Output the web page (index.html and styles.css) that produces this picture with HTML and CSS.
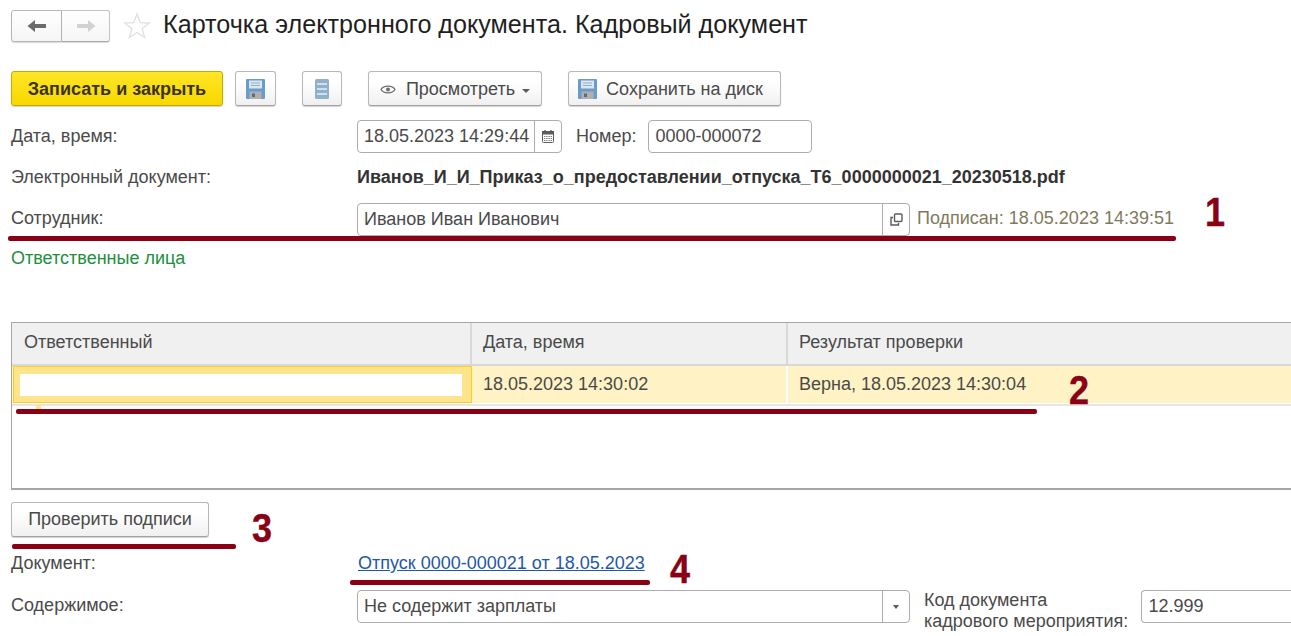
FILE: index.html
```html
<!DOCTYPE html>
<html lang="ru">
<head>
<meta charset="utf-8">
<title>Карточка электронного документа. Кадровый документ</title>
<link rel="stylesheet" href="styles.css">
</head>
<body>
<main class="page">
  <header class="header">
    <div class="nav">
      <button class="nav-btn nav-back" type="button" aria-label="Назад">
        <svg width="20" height="14" viewBox="0 0 20 14"><path d="M0.5 7 L8 1 V5 H19 V9 H8 V13 Z" fill="#6b6b6b"/></svg>
      </button>
      <button class="nav-btn nav-forward" type="button" aria-label="Вперёд">
        <svg width="20" height="14" viewBox="0 0 20 14"><path d="M19.5 7 L12 1 V5 H1 V9 H12 V13 Z" fill="#d2d2d2"/></svg>
      </button>
    </div>
    <svg class="star" width="28" height="28" viewBox="0 0 28 28"><path d="M14 2 L17.2 10.6 L26.4 11 L19.2 16.7 L21.7 25.6 L14 20.5 L6.3 25.6 L8.8 16.7 L1.6 11 L10.8 10.6 Z" fill="#fff" stroke="#e0e0e0" stroke-width="1.3"/></svg>
    <h1 class="title">Карточка электронного документа. Кадровый документ</h1>
  </header>

  <div class="toolbar">
    <div class="toolbar-group">
      <button class="btn btn-primary" type="button">Записать и закрыть</button>
      <button class="btn btn-icon btn-save" type="button" aria-label="Записать">
        <svg width="19" height="20" viewBox="0 0 19 20"><use href="#floppy"/></svg>
      </button>
    </div>
    <button class="btn btn-icon btn-list" type="button" aria-label="Список">
      <svg width="14" height="20" viewBox="0 0 14 20"><rect width="14" height="20" rx="1.5" fill="#8fb1c9"/><path d="M2 5H12M2 10H12M2 15H12" stroke="#e6eef3" stroke-width="1.4"/></svg>
    </button>
    <button class="btn btn-view" type="button">
      <svg width="16" height="11" viewBox="0 0 16 11"><path d="M1 5.5 C3.5 1 12.5 1 15 5.5 C12.5 10 3.5 10 1 5.5 Z" fill="none" stroke="#6e6e6e" stroke-width="1.3"/><circle cx="8" cy="5.5" r="2" fill="#6e6e6e"/></svg>
      <span>Просмотреть</span>
      <span class="caret"></span>
    </button>
    <button class="btn btn-disk" type="button">
      <svg width="19" height="20" viewBox="0 0 19 20">
        <g id="floppy">
          <path d="M1 0H18a1 1 0 0 1 1 1V19a1 1 0 0 1-1 1H1a1 1 0 0 1-1-1V1a1 1 0 0 1 1-1Z" fill="#6a9ccb"/>
          <rect x="3" y="1.5" width="13" height="8" fill="#dbe6f0"/>
          <path d="M5 4H14M5 6.5H14" stroke="#8fb1c9" stroke-width="1"/>
          <rect x="3.5" y="12.5" width="12" height="7.5" fill="#b0b0b0"/>
          <rect x="6" y="14.5" width="3" height="3.5" fill="#5d6d7a"/>
        </g>
      </svg>
      <span>Сохранить на диск</span>
    </button>
  </div>

  <div class="row row-date">
    <label class="label">Дата, время:</label>
    <div class="field field-date">
      <span class="field-text">18.05.2023 14:29:44</span>
      <span class="field-addon">
        <svg width="12" height="13" viewBox="0 0 12 13"><rect x="0.5" y="1.5" width="11" height="11" rx="1" fill="#fff" stroke="#5c5c5c"/><rect y="1" width="12" height="3.5" fill="#5c5c5c"/><path d="M3 0V2M9 0V2" stroke="#5c5c5c" stroke-width="1.4"/><path d="M2 6.5H10M2 8.5H10M2 10.5H10" stroke="#7d7d7d" stroke-dasharray="1.4 .8"/></svg>
      </span>
    </div>
    <label class="label label-number">Номер:</label>
    <div class="field field-number"><span class="field-text">0000-000072</span></div>
  </div>

  <div class="row row-text row-doc">
    <span class="label">Электронный документ:</span>
    <strong class="filename">Иванов_И_И_Приказ_о_предоставлении_отпуска_Т6_0000000021_20230518.pdf</strong>
  </div>

  <div class="row row-employee">
    <label class="label label-raised">Сотрудник:</label>
    <div class="field field-employee">
      <span class="field-text">Иванов Иван Иванович</span>
      <span class="field-addon">
        <svg width="13" height="13" viewBox="0 0 13 13"><rect x="4.5" y="1" width="7.5" height="7.5" rx="1" fill="none" stroke="#5c5c5c" stroke-width="1.4"/><path d="M3 4.5H1V12H8.5V10" fill="none" stroke="#5c5c5c" stroke-width="1.4"/></svg>
      </span>
    </div>
    <span class="signed">Подписан: 18.05.2023 14:39:51</span>
  </div>

  <div class="row-text section-link">Ответственные лица</div>

  <div class="table">
    <div class="table-head">
      <div class="col col-1">Ответственный</div>
      <div class="col col-2">Дата, время</div>
      <div class="col col-3">Результат проверки</div>
    </div>
    <div class="table-row">
      <div class="col col-1 cell-selected"><div class="redacted"></div></div>
      <div class="col col-2">18.05.2023 14:30:02</div>
      <div class="col col-3">Верна, 18.05.2023 14:30:04</div>
    </div>
    <div class="row-line"></div>
    <span class="row-marker"></span>
  </div>

  <button class="btn btn-check" type="button">Проверить подписи</button>

  <div class="row row-text row-source">
    <span class="label">Документ:</span>
    <a class="doc-link" href="#">Отпуск 0000-000021 от 18.05.2023</a>
  </div>

  <div class="row row-content">
    <label class="label label-content">Содержимое:</label>
    <div class="field field-content">
      <span class="field-text">Не содержит зарплаты</span>
      <span class="field-addon"><span class="caret caret-dark"></span></span>
    </div>
    <label class="label label-code">Код документа<br>кадрового мероприятия:</label>
    <div class="field field-code"><span class="field-text">12.999</span></div>
  </div>
</main>

<div class="mark mark-line mark-line-1"></div>
<div class="mark mark-line mark-line-2"></div>
<div class="mark mark-line mark-line-3"></div>
<div class="mark mark-line mark-line-4"></div>
<div class="mark mark-num mark-num-1">1</div>
<div class="mark mark-num mark-num-2">2</div>
<div class="mark mark-num mark-num-3">3</div>
<div class="mark mark-num mark-num-4">4</div>
</body>
</html>
```

FILE: styles.css
```css
* { box-sizing: border-box; }

html, body {
  margin: 0;
  width: 1291px;
  height: 636px;
  overflow: hidden;
  background: #fff;
}

body {
  position: relative;
  font-family: "Liberation Sans", Arial, sans-serif;
  font-size: 18px;
  color: #4a4a4a;
}

.page {
  padding: 10px 0 0 11px;
  display: flex;
  flex-direction: column;
  align-items: flex-start;
}

/* header */
.header {
  display: flex;
  align-items: center;
  height: 32px;
  margin-bottom: 29px;
}

.nav {
  display: flex;
  width: 99px;
  height: 32px;
  margin-right: 13px;
}

.nav-btn {
  display: flex;
  align-items: center;
  justify-content: center;
  padding: 0;
  height: 32px;
  border: 1px solid #c4c4c4;
  border-bottom-color: #aaa;
  background: linear-gradient(#fff, #f5f5f5);
  box-shadow: 0 1px 1px rgba(0, 0, 0, .15);
}

.nav-back {
  width: 51px;
  border-radius: 3px 0 0 3px;
  border-color: #b5b5b5;
}

.nav-forward {
  width: 48px;
  border-left: 0;
  border-radius: 0 3px 3px 0;
}

.star { margin-right: 12px; }

.title {
  margin: 0 0 3px;
  font-size: 25.15px;
  font-weight: 400;
  color: #1f1f1f;
  line-height: 29px;
  white-space: nowrap;
}

/* buttons */
.btn {
  display: flex;
  align-items: center;
  justify-content: center;
  height: 35px;
  padding: 0;
  font: inherit;
  color: #4a4a4a;
  border: 1px solid #b8b8b8;
  border-bottom-color: #a2a2a2;
  border-radius: 3px;
  background: linear-gradient(#fff 30%, #f0f0f0);
  box-shadow: 0 1px 1px rgba(0, 0, 0, .18);
  white-space: nowrap;
}

.toolbar {
  display: flex;
  align-items: center;
  gap: 26px;
  height: 35px;
  margin-bottom: 14px;
}

.toolbar-group {
  display: flex;
  gap: 12px;
}

.btn-primary {
  width: 212px;
  padding-top: 1px;
  font-size: 18px;
  font-weight: 700;
  color: #3a3320;
  border-color: #c9a900;
  background: linear-gradient(#ffe626, #f8d800);
}

.btn-save { width: 41px; }
.btn-list { width: 40px; }

.btn-view {
  width: 174px;
  padding-top: 1px;
  gap: 10px;
}

.btn-disk {
  width: 213px;
  padding: 1px 8px 0 0;
  gap: 9px;
}

.caret {
  width: 0;
  height: 0;
  border-left: 4px solid transparent;
  border-right: 4px solid transparent;
  border-top: 4px solid #5c5c5c;
  margin-left: -3px;
  margin-top: 3px;
}

.caret-dark {
  margin: 0;
  border-left-width: 3.5px;
  border-right-width: 3.5px;
}

/* form rows */
.row {
  display: flex;
  align-items: center;
}

.label {
  width: 346px;
  flex: none;
  white-space: nowrap;
}

.label-raised { padding-bottom: 2px; }

.row-text {
  height: 20px;
  line-height: 20px;
}

.row-date {
  height: 33px;
}

.row-doc { margin-top: 14px; }

.row-employee {
  height: 33px;
  margin-top: 16px;
}

.section-link {
  margin-top: 12px;
  margin-bottom: 54px;
  color: #1e8f3c;
}

.field {
  display: flex;
  align-items: stretch;
  height: 33px;
  border: 1px solid #adadad;
  border-radius: 4px;
  background: #fff;
  flex: none;
}

.field-text {
  flex: 1;
  padding-left: 6px;
  line-height: 30px;
  white-space: nowrap;
  overflow: hidden;
}

.field-addon {
  width: 27px;
  flex: none;
  display: flex;
  align-items: center;
  justify-content: center;
  border-left: 1px solid #adadad;
}

.field-date { width: 205px; }

.label-number {
  width: auto;
  margin-left: 14px;
  margin-right: 12px;
}

.field-number { width: 164px; }
.field-employee { width: 553px; }
.field-content { width: 553px; }

.signed {
  margin-left: 7px;
  padding-bottom: 2px;
  color: #7f7a5c;
  white-space: nowrap;
}

.filename {
  color: #333;
  white-space: nowrap;
}

/* table */
.table {
  position: relative;
  width: 1280px;
  height: 168px;
  border: 2px solid #a6a6a6;
  border-width: 1px 0 2px 1px;
  margin-bottom: 12px;
}

.table-head,
.table-row {
  display: flex;
  padding-left: 1px;
}

.table-head {
  height: 43px;
  background: #f0f0f0;
  border-bottom: 2px solid #d8d8d8;
}

.table-row {
  height: 37px;
  background: #fff2c4;
}

.col {
  flex: none;
  padding-left: 11px;
  padding-bottom: 2px;
  display: flex;
  align-items: center;
  border-right: 2px solid #d9d9d9;
}

.table-row .col {
  padding-bottom: 1px;
  border-right-color: #fff;
}

.col-1 { width: 459px; }
.col-2 { width: 316px; }

.col-3 {
  flex: 1;
  border-right: 0;
}

.table-row .col-3 { border-right: 0; }

.table-row .cell-selected {
  padding: 1px 9px 0 6px;
  background: #ffe48e;
  border: 1.5px solid #ffce22;
}

.redacted {
  flex: 1;
  height: 22px;
  background: #fff;
}

.row-line {
  height: 2px;
  margin-top: 1px;
  background: #e6e6e6;
}

.row-marker {
  position: absolute;
  left: 24px;
  top: 82px;
  width: 5px;
  height: 5px;
  background: #ffe48e;
}

.btn-check {
  width: 198px;
}

.row-source {
  margin-top: 16px;
}

.doc-link {
  color: #1f57a8;
  text-decoration: underline;
  white-space: nowrap;
  margin-left: 1px;
}

.row-content {
  margin-top: 17px;
  height: 33px;
}

.label-content {
  align-self: flex-start;
  line-height: 30px;
}

.label-code {
  width: auto;
  margin-left: 14px;
  margin-right: 13px;
  margin-top: 8px;
  line-height: 21px;
  height: 42px;
}

.field-code {
  width: 150px;
  border-right: 0;
  border-radius: 4px 0 0 4px;
}

/* annotations drawn over the screenshot */
.mark { position: absolute; }

.mark-line {
  height: 5px;
  border-radius: 2px;
  background: #8a0015;
}

.mark-line-1 { left: 8px; top: 236px; width: 1168px; }
.mark-line-2 { left: 16px; top: 409px; width: 1021px; }
.mark-line-3 { left: 12px; top: 544px; width: 224px; }
.mark-line-4 { left: 350px; top: 580px; width: 300px; }

.mark-num {
  font-size: 40px;
  font-weight: 700;
  line-height: 40px;
  color: #8a0015;
  -webkit-text-stroke: .4px #8a0015;
  transform: scaleX(.9);
}

.mark-num-1 { left: 1204px; top: 192px; }
.mark-num-2 { left: 1068px; top: 370px; }
.mark-num-3 { left: 251px; top: 508px; }
.mark-num-4 { left: 669px; top: 549px; }
```
